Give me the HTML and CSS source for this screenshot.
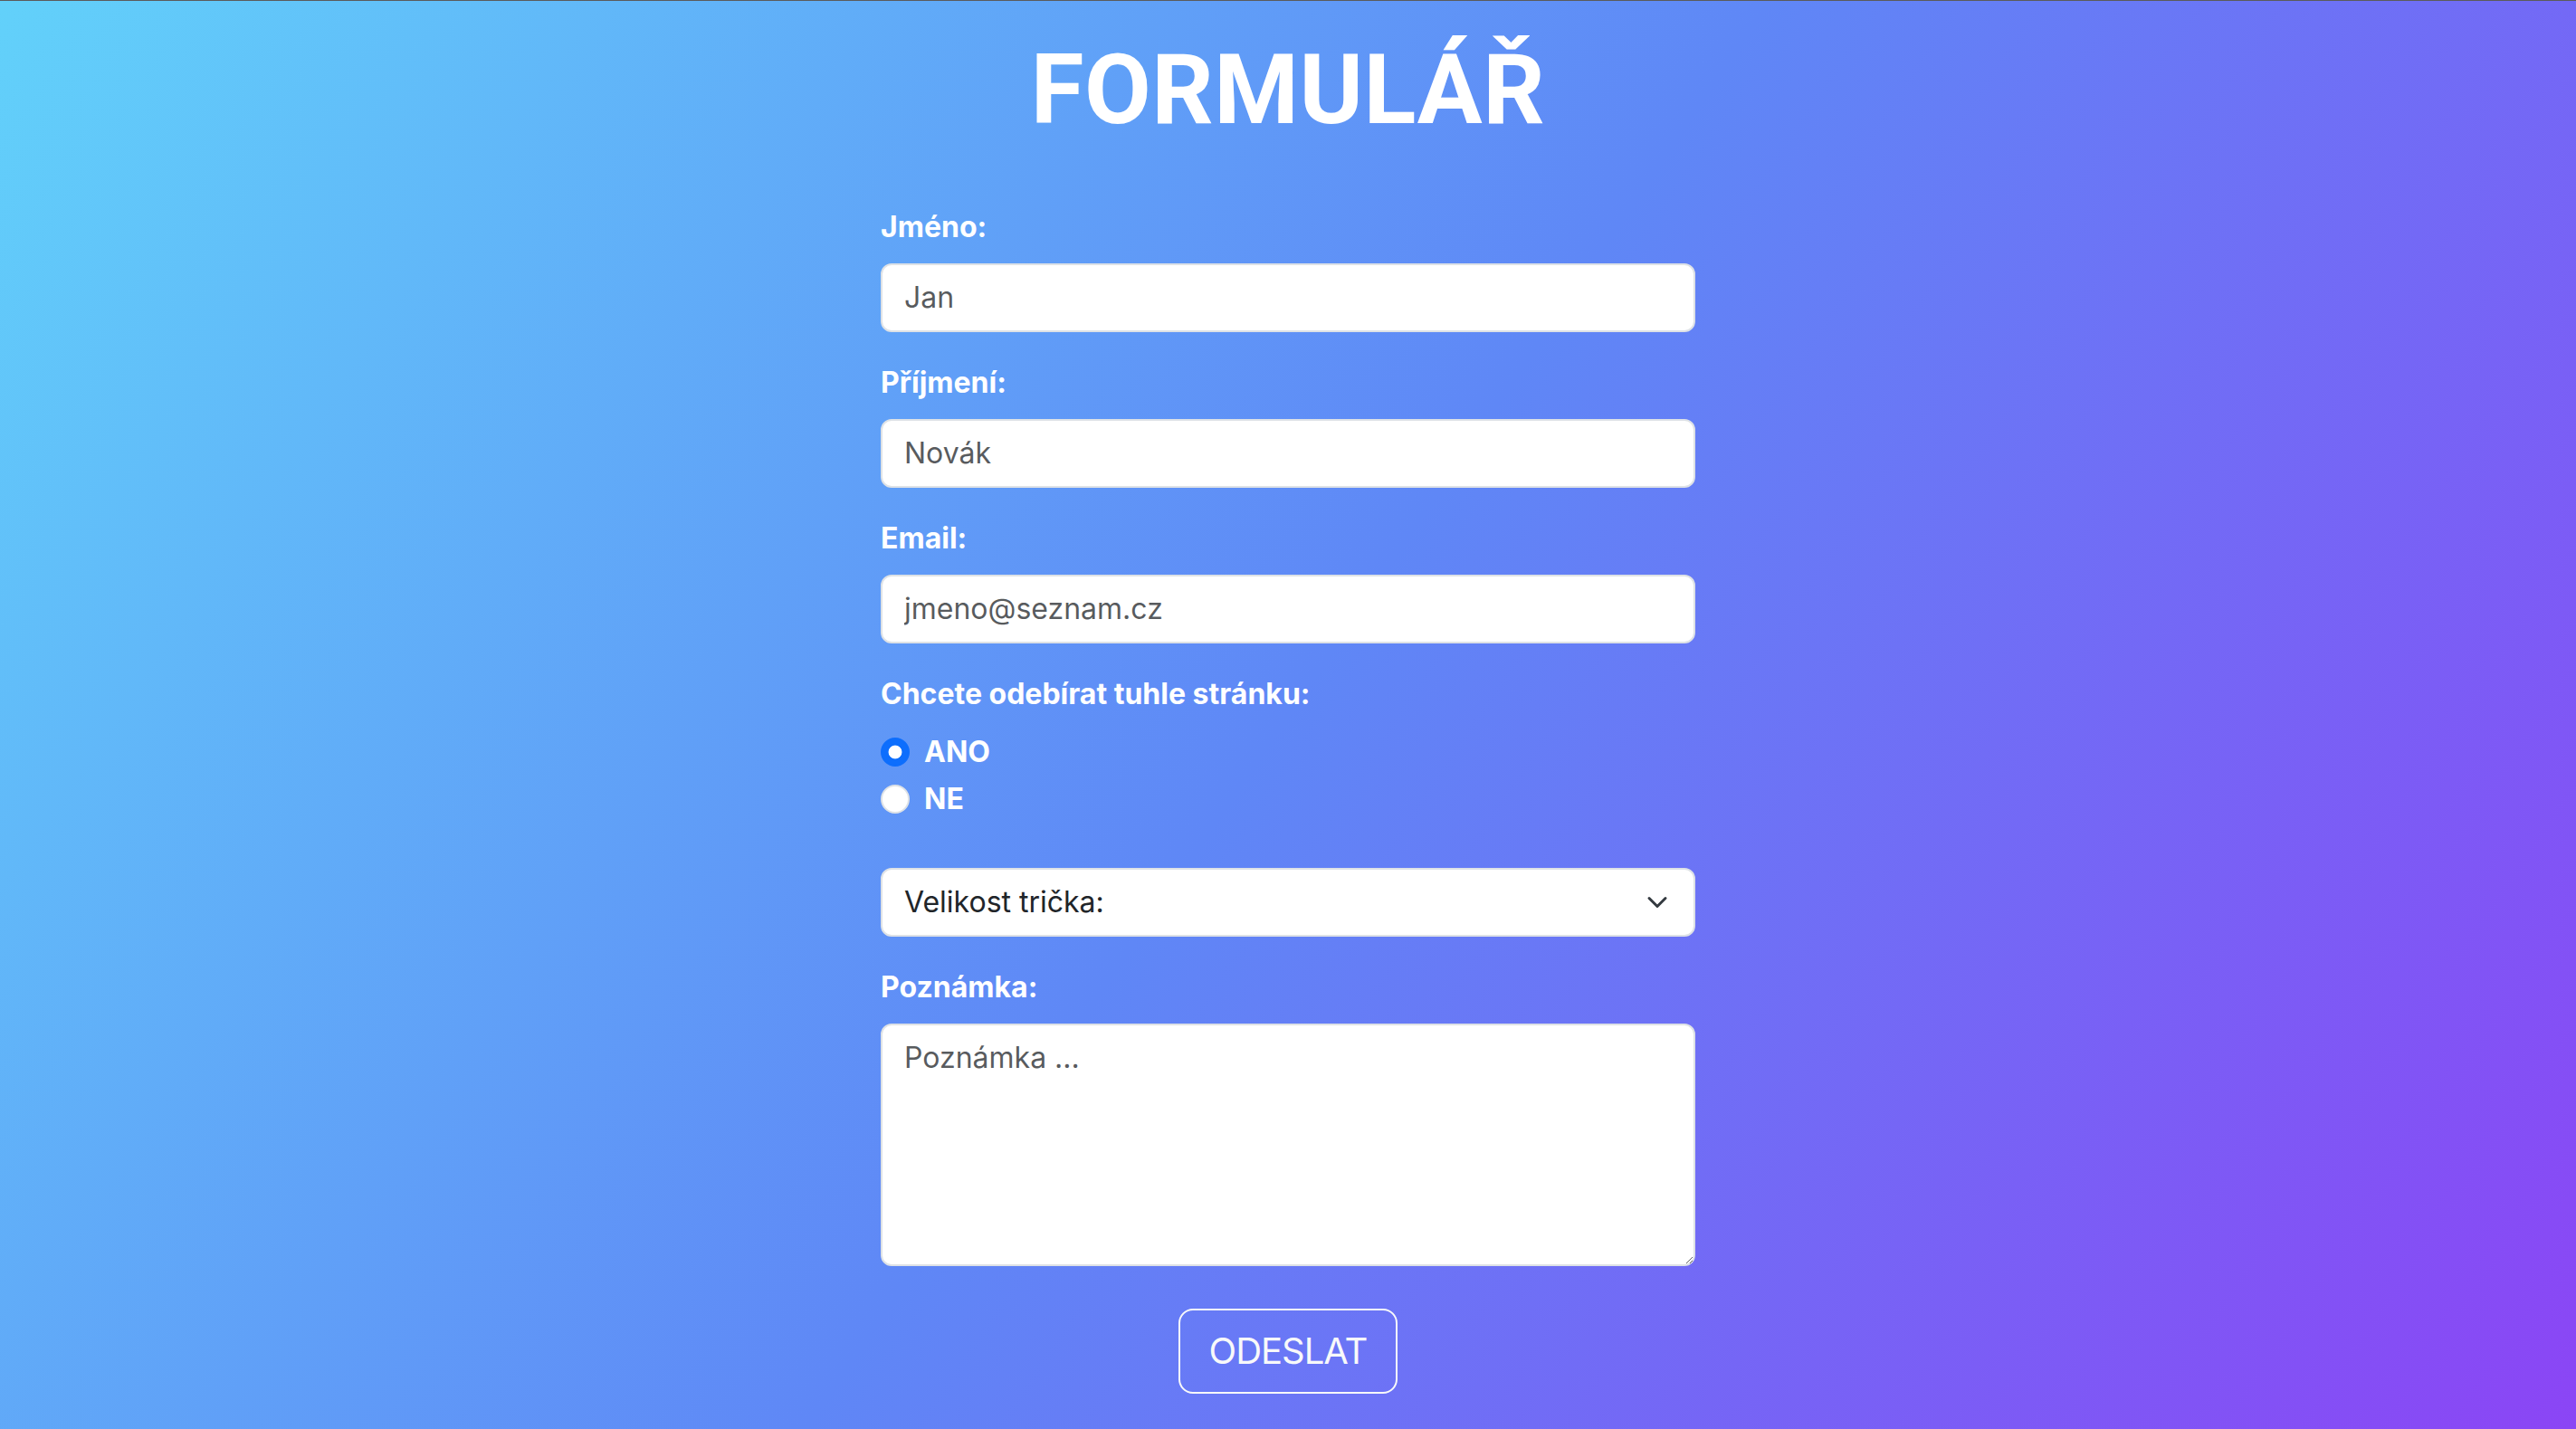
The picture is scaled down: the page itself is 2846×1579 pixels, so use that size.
FILE: index.html
```html
<!DOCTYPE html>
<html lang="cs">
<head>
<meta charset="utf-8">
<title>Formulář</title>
<link rel="stylesheet" href="styles.css">
</head>
<body>
<main class="page">
  <h1 class="title">FORMULÁŘ</h1>
  <form class="form" onsubmit="return false">
    <div class="field">
      <label class="label" for="jmeno">Jméno:</label>
      <input class="control" id="jmeno" type="text" placeholder="Jan">
    </div>
    <div class="field">
      <label class="label" for="prijmeni">Příjmení:</label>
      <input class="control" id="prijmeni" type="text" placeholder="Novák">
    </div>
    <div class="field">
      <label class="label" for="email">Email:</label>
      <input class="control" id="email" type="email" placeholder="jmeno@seznam.cz">
    </div>
    <div class="field field-radios">
      <span class="label">Chcete odebírat tuhle stránku:</span>
      <label class="check"><input class="radio" type="radio" name="odber" value="ano" checked><span class="check-text">ANO</span></label>
      <label class="check"><input class="radio" type="radio" name="odber" value="ne"><span class="check-text">NE</span></label>
    </div>
    <div class="field select-wrap">
      <select class="control select" aria-label="Velikost trička">
        <option>Velikost trička:</option>
        <option>S</option>
        <option>M</option>
        <option>L</option>
        <option>XL</option>
      </select>
      <svg class="chevron" viewBox="0 0 16 16" width="24" height="24" aria-hidden="true"><path d="m2 5 6 6 6-6" fill="none" stroke="#343a40" stroke-width="2" stroke-linecap="round" stroke-linejoin="round"/></svg>
    </div>
    <div class="field field-note">
      <label class="label" for="poznamka">Poznámka:</label>
      <textarea class="control textarea" id="poznamka" rows="5" placeholder="Poznámka ..."></textarea>
    </div>
    <div class="actions">
      <button class="btn" type="submit">ODESLAT</button>
    </div>
  </form>
</main>
</body>
</html>
```

FILE: styles.css
```css
html, body {
  margin: 0;
  height: 100%;
}

body {
  box-sizing: border-box;
  min-height: 100vh;
  overflow: hidden;
  border-top: 1px solid #5b5b5b;
  background: linear-gradient(124deg, #62d1fa 0%, #5f87f6 50%, #8b45f5 100%);
  font-family: Inter, "Noto Sans", "Liberation Sans", sans-serif;
  color: #fff;
}

.page {
  padding-top: 35px;
}

.title {
  margin: 0 0 63px;
  text-align: center;
  font-family: Roboto, "Liberation Sans", sans-serif;
  font-weight: 700;
  font-size: 107px;
  line-height: 1.2;
  letter-spacing: 0.5px;
  color: #fff;
}

.form {
  width: 900px;
  margin: 0 auto;
}

.field {
  margin-bottom: 32px;
}

.label {
  display: block;
  margin-bottom: 16px;
  font-weight: 700;
  font-size: 32px;
  line-height: 48px;
  color: #fff;
}

.control {
  display: block;
  box-sizing: border-box;
  width: 100%;
  margin: 0;
  padding: 12px 24px;
  font-family: Inter, "Noto Sans", "Liberation Sans", sans-serif;
  font-weight: 400;
  font-size: 32px;
  line-height: 48px;
  color: #212529;
  background: #fff;
  border: 2px solid #dee2e6;
  border-radius: 12px;
  outline: none;
}

.control::placeholder {
  color: rgba(33, 37, 41, 0.75);
  opacity: 1;
}

.field-radios {
  margin-bottom: 52px;
}

.check {
  display: flex;
  align-items: center;
  gap: 16px;
  min-height: 48px;
  margin-bottom: 4px;
  font-weight: 700;
  font-size: 32px;
  line-height: 48px;
}

.radio {
  appearance: none;
  -webkit-appearance: none;
  flex: none;
  box-sizing: border-box;
  width: 32px;
  height: 32px;
  margin: 0;
  border-radius: 50%;
  background: #fff;
  border: 2px solid #dee2e6;
}

.radio:checked {
  border-color: #0d6efd;
  background: radial-gradient(circle, #fff 0 7px, #0d6efd 7.8px);
}

.select-wrap {
  position: relative;
}

.select {
  appearance: none;
  -webkit-appearance: none;
  padding-right: 72px;
  height: 76px;
  color: #212529;
}

.chevron {
  position: absolute;
  right: 30px;
  top: 26px;
  pointer-events: none;
}

.field-note {
  margin-bottom: 47px;
}

.textarea {
  resize: vertical;
}

.actions {
  display: flex;
  justify-content: center;
}

.btn {
  padding: 16px 32px;
  font-family: Inter, "Noto Sans", "Liberation Sans", sans-serif;
  font-weight: 400;
  font-size: 40px;
  line-height: 58px;
  letter-spacing: -1px;
  color: #f8f9fa;
  background: transparent;
  border: 2px solid #f8f9fa;
  border-radius: 16px;
  cursor: pointer;
}
```
